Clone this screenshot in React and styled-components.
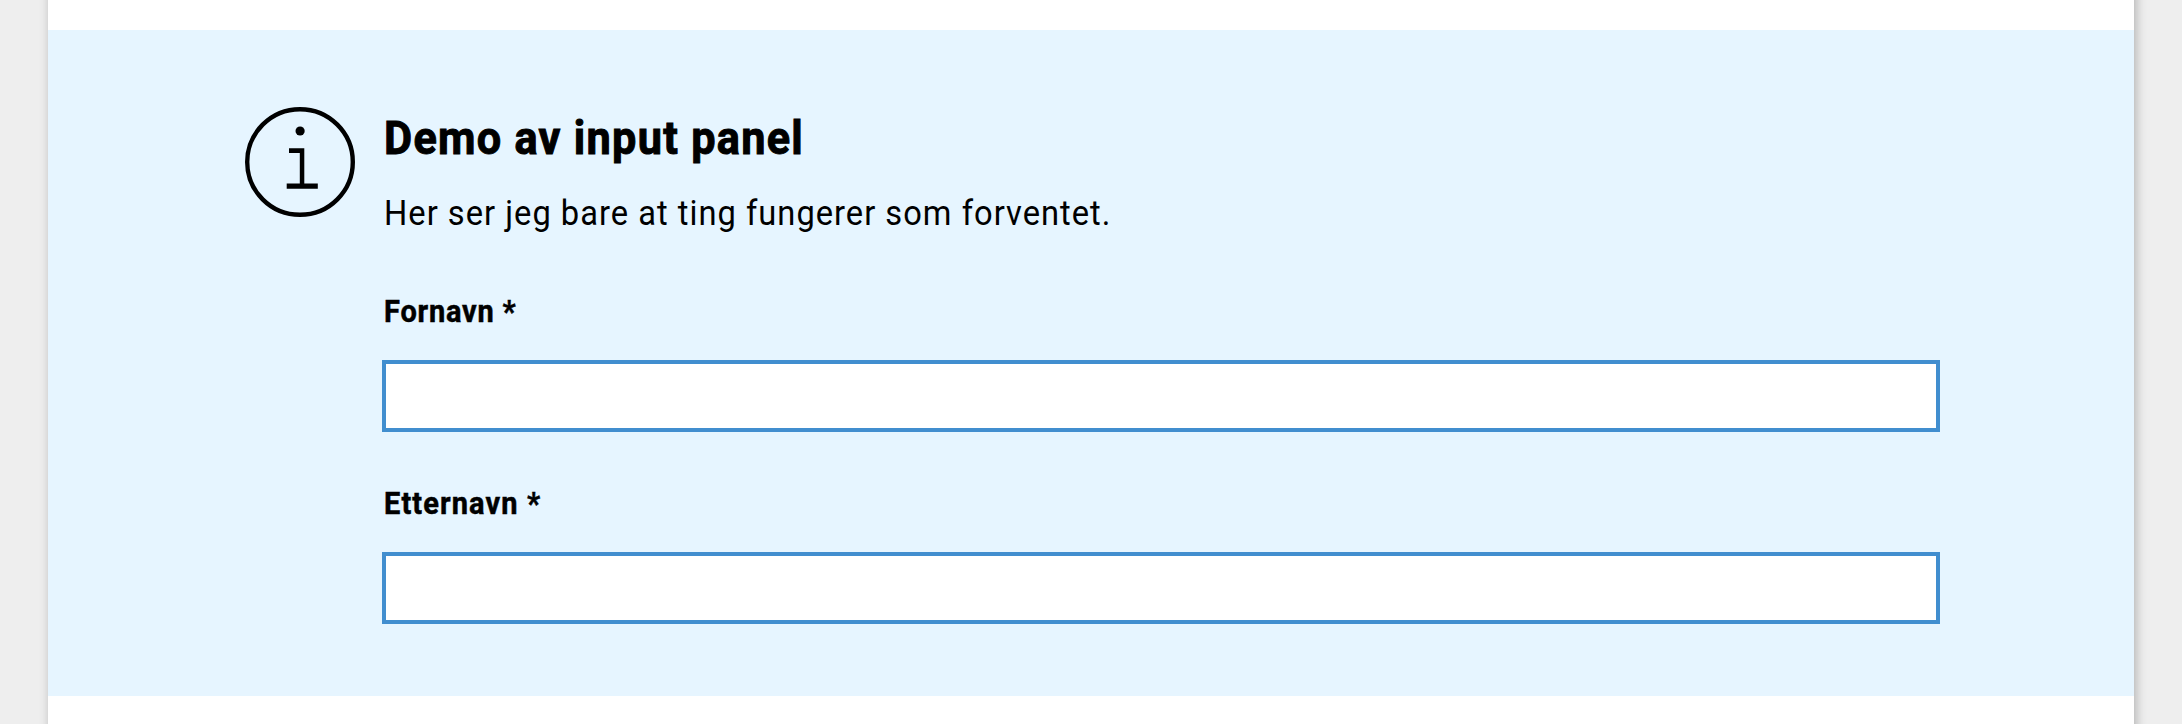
import React from "react";
import styled, { createGlobalStyle } from "styled-components";

const GlobalStyle = createGlobalStyle`
  *, *::before, *::after { box-sizing: border-box; }
  body {
    margin: 0;
    background: #eeeeee;
    color: #000;
    font-family: Roboto, "Liberation Sans", sans-serif;
  }
`;

const Backdrop = styled.div`
  display: flex;
  align-items: center;
  height: 724px;
  padding: 0 48px;
  overflow: hidden;
`;

const Page = styled.main`
  flex: 1;
  flex-shrink: 0;
  height: 764px;
  padding: 50px 0 48px;
  background: #fff;
  box-shadow: 2px 0 10px rgba(0, 0, 0, 0.26);
`;

const Panel = styled.section`
  display: flex;
  height: 666px;
  padding: 77px 194px 0 197px;
  background: #e6f5ff;
`;

const InfoIcon = styled.svg`
  flex: none;
  width: 110px;
  height: 110px;
  margin-right: 27px;
`;

const Content = styled.div`
  flex: 1;
`;

const Line = styled.span`
  display: inline-block;
  white-space: pre;
  letter-spacing: ${(p) => p.$tracking}px;
  transform: scaleX(0.92);
  transform-origin: 0 50%;
`;

const Heading = styled.h2`
  margin: 0;
  padding: 1px 0 0 2px;
  font-size: 47px;
  line-height: 60px;
  font-weight: 700;
  -webkit-text-stroke: 1px #000;
`;

const Text = styled.p`
  margin: 19px 0 0;
  padding-left: 2px;
  font-size: 35.5px;
  line-height: 52px;
`;

const Field = styled.label`
  display: block;
  margin-top: ${(p) => p.$gap}px;
`;

const LabelText = styled.span`
  display: block;
  height: 72px;
  padding-left: 2px;
  font-size: 31.5px;
  line-height: 48px;
  font-weight: 700;
  -webkit-text-stroke: 0.5px #000;
`;

const Input = styled.input`
  display: block;
  width: 100%;
  height: 72px;
  padding: 0 16px;
  border: 4px solid #418ecf;
  border-radius: 0;
  background: #fff;
  font: inherit;
  outline: none;
`;

export default function App() {
  return (
    <>
      <GlobalStyle />
      <Backdrop>
        <Page>
          <Panel>
            <InfoIcon viewBox="0 0 110 110" aria-hidden="true">
              <circle cx="55" cy="55" r="52.8" fill="none" stroke="#000" strokeWidth="4.4" />
              <circle cx="55.1" cy="24" r="4.6" />
              <path d="M44 41.3h15.3v35.2h13.5v5.3H41.7v-5.3h13.1V46H44z" />
            </InfoIcon>
            <Content>
              <Heading><Line $tracking={1.4}>Demo av input panel</Line></Heading>
              <Text><Line $tracking={1.1}>Her ser jeg bare at ting fungerer som forventet.</Line></Text>
              <Field $gap={49}>
                <LabelText><Line $tracking={0.85}>Fornavn *</Line></LabelText>
                <Input type="text" />
              </Field>
              <Field $gap={48}>
                <LabelText><Line $tracking={1.2}>Etternavn *</Line></LabelText>
                <Input type="text" />
              </Field>
            </Content>
          </Panel>
        </Page>
      </Backdrop>
    </>
  );
}
